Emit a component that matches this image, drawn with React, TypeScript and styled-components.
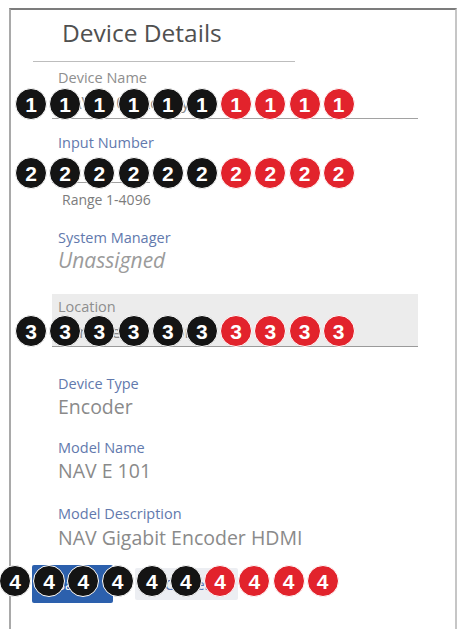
import React from "react";
import styled, { createGlobalStyle, css } from "styled-components";

const GlobalStyle = createGlobalStyle`
  html, body {
    margin: 0;
    padding: 0;
    background: #ffffff;
    overflow: hidden;
  }
  body {
    font-family: "Open Sans", "Noto Sans", sans-serif;
    color: #666;
  }
`;

const Card = styled.section`
  box-sizing: border-box;
  margin: 8px 0 0 9px;
  width: 448px;
  min-height: calc(100vh - 8px);
  border-top: 2px solid #7c7c7c;
  border-left: 2px solid #a9a9a9;
  border-right: 2px solid #c6c6c6;
  background: #fff;
`;

const Header = styled.header`
  display: flex;
  flex-direction: column;
`;

const Title = styled.h2`
  margin: 7px 0 0 51px;
  font-size: 24.5px;
  line-height: 32px;
  font-weight: 400;
  color: #505050;
`;

const HeaderRule = styled.div`
  margin: 12px 0 0 22px;
  width: 262px;
  height: 1px;
  background: #bdbdbd;
`;

const Body = styled.div`
  display: flex;
  flex-direction: column;
  padding-left: 21px;
`;

const Column = styled.div`
  display: flex;
  flex-direction: column;
  padding-left: 20px;
`;

const Field = styled.div<{ $mt: number; $filled?: boolean }>`
  position: relative;
  box-sizing: border-box;
  width: 366px;
  margin-top: ${(p) => p.$mt}px;
  ${(p) =>
    p.$filled &&
    css`
      padding-top: 3px;
      background: #ececec;
      border-bottom: 1px solid #9a9a9a;
    `}
`;

const Label = styled.div<{ $tone: "muted" | "accent" }>`
  padding-left: 6px;
  font-size: 14.5px;
  line-height: 19px;
  color: ${(p) => (p.$tone === "accent" ? "#6279ad" : "#8e8e8e")};
`;

const InputLine = styled.div<{ $width?: number; $h: number; $line?: boolean }>`
  box-sizing: border-box;
  width: ${(p) => (p.$width ? `${p.$width}px` : "100%")};
  height: ${(p) => p.$h}px;
  padding: 4px 0 0 6px;
  font-size: 17px;
  line-height: 24px;
  color: #8a8a8a;
  ${(p) => p.$line && css`border-bottom: 1px solid #a2a2a2;`}
`;

const Hint = styled.div`
  margin-top: 8px;
  padding-left: 10px;
  font-size: 14px;
  line-height: 18px;
  color: #7c7c7c;
`;

const Value = styled.div<{ $italic?: boolean; $mt?: number }>`
  margin-top: ${(p) => p.$mt ?? 1}px;
  padding-left: 6px;
  font-size: ${(p) => (p.$italic ? 21 : 19.5)}px;
  line-height: 26px;
  font-style: ${(p) => (p.$italic ? "italic" : "normal")};
  color: ${(p) => (p.$italic ? "#9b9b9b" : "#8a8a8a")};
`;

const ButtonRow = styled.div`
  position: relative;
  display: flex;
  align-items: center;
  gap: 22px;
  margin-top: 14px;
`;

const Button = styled.button<{ $primary?: boolean }>`
  box-sizing: border-box;
  border: none;
  border-radius: 2px;
  font-family: "Open Sans", "Noto Sans", sans-serif;
  font-size: 14px;
  padding: 0;
  ${(p) =>
    p.$primary
      ? css`
          width: 81px;
          height: 38px;
          background: #2c60ad;
          color: #ffffff;
        `
      : css`
          width: 103px;
          height: 32px;
          background: #eceef2;
          color: #5a78b6;
        `}
`;

/* Numbered callout markers laid over a row */
const Strip = styled.div<{ $top: number; $left: number }>`
  position: absolute;
  top: ${(p) => p.$top}px;
  left: ${(p) => p.$left}px;
  display: flex;
  gap: 2.2px;
  pointer-events: none;
`;

const Marker = styled.span<{ $red?: boolean }>`
  box-sizing: border-box;
  width: 32px;
  height: 32px;
  border-radius: 50%;
  border: 1.5px solid #ffffff;
  background: ${(p) => (p.$red ? "#e2232c" : "#141414")};
  color: #ffffff;
  display: flex;
  align-items: center;
  justify-content: center;
  font-family: "Liberation Sans", Arial, sans-serif;
  font-weight: 700;
  font-size: 21px;
  line-height: 1;
`;

function Markers({ n, top, left }: { n: number; top: number; left: number }) {
  return (
    <Strip $top={top} $left={left}>
      {Array.from({ length: 10 }, (_, i) => (
        <Marker key={i} $red={i >= 6}>
          {n}
        </Marker>
      ))}
    </Strip>
  );
}

export default function App() {
  return (
    <>
      <GlobalStyle />
      <Card>
        <Header>
          <Title>Device Details</Title>
          <HeaderRule />
        </Header>
        <Body>
          <Column>
            <Field $mt={6}>
              <Label $tone="muted">Device Name</Label>
              <InputLine $h={32} $line>
                NAV-E101-Lobby
              </InputLine>
              <Markers n={1} top={20} left={-37} />
            </Field>

            <Field $mt={14}>
              <Label $tone="accent">Input Number</Label>
              <InputLine $h={31} $width={98} $line>
                1
              </InputLine>
              <Hint>Range 1-4096</Hint>
              <Markers n={2} top={24} left={-37} />
            </Field>

            <Field $mt={19}>
              <Label $tone="accent">System Manager</Label>
              <Value $italic $mt={0}>
                Unassigned
              </Value>
            </Field>

            <Field $mt={21} $filled>
              <Label $tone="muted">Location</Label>
              <InputLine $h={30}>Conference Room</InputLine>
              <Markers n={3} top={21} left={-37} />
            </Field>

            <Field $mt={27}>
              <Label $tone="accent">Device Type</Label>
              <Value>Encoder</Value>
            </Field>

            <Field $mt={18}>
              <Label $tone="accent">Model Name</Label>
              <Value>NAV E 101</Value>
            </Field>

            <Field $mt={20}>
              <Label $tone="accent">Model Description</Label>
              <Value $mt={2}>NAV Gigabit Encoder HDMI</Value>
            </Field>
          </Column>

          <ButtonRow>
            <Button $primary>Save</Button>
            <Button>Cancel</Button>
            <Markers n={4} top={0} left={-33} />
          </ButtonRow>
        </Body>
      </Card>
    </>
  );
}
